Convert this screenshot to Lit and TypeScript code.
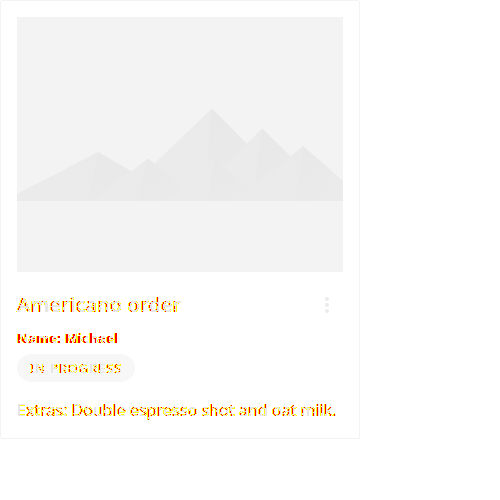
import { LitElement, html, css, svg } from "lit";
import { customElement } from "lit/decorators.js";

@customElement("app-root")
export class AppRoot extends LitElement {
  static styles = css`
    :host { display: block; width: 500px; height: 500px; background: #fff; font-family: "Noto Sans", "Open Sans", sans-serif; }
    .card { box-sizing: border-box; width: 360px; height: 439px; padding: 16px; border: 1px solid #f3f3f3; border-radius: 2px; }
    .picture { display: block; width: 326px; height: 255px; }
    .head { display: flex; justify-content: space-between; align-items: center; height: 28px; margin-top: 19px; }
    .title { margin: 0; font-size: 20px; line-height: 28px; font-weight: 500; letter-spacing: 0.2px; }
    .dots { width: 32px; height: 32px; display: block; }
    .name { margin: 9px 0 0; font-size: 13px; line-height: 20px; font-weight: 700; letter-spacing: 0.36px; }
    .badge { box-sizing: border-box; display: flex; align-items: center; width: 118px; height: 28px; margin-top: 6px; padding-left: 13px; border-radius: 14px; background: #f7f7f7; font-size: 13px; line-height: 20px; letter-spacing: 0.85px; }
    .extras { margin: 16px 0 0; font-size: 16px; line-height: 24px; letter-spacing: 0.03px; white-space: nowrap; }
    .diff { display: inline-block; white-space: nowrap; filter: url(#diff-light); color: #000; }
    .name .diff { filter: url(#diff-heavy); }
    .defs { position: absolute; width: 0; height: 0; }
  `;

  private mountain(points: string, id: string) {
    return svg`<polygon points=${points} fill=${`url(#${id})`} />`;
  }

  private diffFilter(id: string, patches: string, reach: number) {
    return svg`
      <filter id=${id} x="-2%" y="-5%" width="104%" height="110%" color-interpolation-filters="sRGB">
        <feComponentTransfer in="SourceAlpha" result="edge"><feFuncA type="discrete" tableValues="0 1 1 1 1 1 1 1 1 1 1 1" /></feComponentTransfer>
        <feComponentTransfer in="SourceAlpha" result="core"><feFuncA type="discrete" tableValues="0 0 0 0 1 1 1 1 1 1" /></feComponentTransfer>
        <feComponentTransfer in="SourceAlpha" result="strong"><feFuncA type="discrete" tableValues="0 0 0 0 0 1 1 1 1 1" /></feComponentTransfer>
        <feOffset in="strong" dx="-1" result="left" />
        <feOffset in="core" dx=${reach} result="right" />
        <feMerge result="outline"><feMergeNode in="edge" /><feMergeNode in="left" /></feMerge>
        <feComposite in="strong" in2="right" operator="out" result="changed" />
        <feTurbulence type="fractalNoise" baseFrequency="0.3 0.2" numOctaves="2" seed="4" />
        <feColorMatrix type="matrix" values="0 0 0 0 0  0 0 0 0 0  0 0 0 0 0  1 0 0 0 0" />
        <feComponentTransfer result="patch"><feFuncA type="discrete" tableValues=${patches} /></feComponentTransfer>
        <feComposite in="changed" in2="patch" operator="in" result="marked" />
        <feFlood flood-color="#ffff00" /><feComposite in2="outline" operator="in" result="yellow" />
        <feFlood flood-color="#e6e6e6" /><feComposite in2="core" operator="in" result="gray" />
        <feFlood flood-color="#ff0000" /><feComposite in2="marked" operator="in" result="red" />
        <feMerge><feMergeNode in="yellow" /><feMergeNode in="gray" /><feMergeNode in="red" /></feMerge>
      </filter>`;
  }

  render() {
    return html`
      <svg class="defs" aria-hidden="true">
        ${this.diffFilter("diff-light", "0 0 0 0 1 1 1 1 1 1", 1)}
        ${this.diffFilter("diff-heavy", "0 0 0 1 1 1 1 1 1 1", 2)}
      </svg>
      <article class="card">
        <svg class="picture" viewBox="17 17 326 255">
          <defs>
            <linearGradient id="wide"><stop offset="0" stop-color="#ebebeb" /><stop offset="1" stop-color="#eaeaea" /></linearGradient>
            <linearGradient id="shade" x1="0" y1="0" x2="1" y2="1"><stop offset="0" stop-color="#e8e8e8" /><stop offset="1" stop-color="#ebebeb" /></linearGradient>
          </defs>
          <rect x="17" y="17" width="326" height="255" fill="#f3f3f3" />
          ${this.mountain("17,194 98,152 182,201 17,201", "wide")}
          ${this.mountain("98,152 182,201 87,201", "shade")}
          ${this.mountain("115,201 212,108.5 303,201", "wide")}
          ${this.mountain("212,108.5 303,201 203,201", "shade")}
          ${this.mountain("92,201 148,158.5 200,201", "wide")}
          ${this.mountain("148,158.5 200,201 137,201", "shade")}
          ${this.mountain("190,201 262,128.5 336,201", "wide")}
          ${this.mountain("262,128.5 336,201 253,201", "shade")}
          ${this.mountain("165,201 214,158 265,201", "wide")}
          ${this.mountain("214,158 265,201 208,201", "shade")}
          ${this.mountain("237,201 303,146 343,181 343,201", "wide")}
          ${this.mountain("303,146 343,181 343,201 295,201", "shade")}
        </svg>
        <div class="head">
          <h2 class="title"><span class="diff">Americano order</span></h2>
          <svg class="dots" viewBox="0 0 32 32" fill="#ebebeb"><circle cx="16" cy="10" r="2" /><circle cx="16" cy="16" r="2" /><circle cx="16" cy="22" r="2" /></svg>
        </div>
        <p class="name"><span class="diff">Name: Michael</span></p>
        <div class="badge"><span class="diff">IN PROGRESS</span></div>
        <p class="extras"><span class="diff">Extras: Double espresso shot and oat milk.</span></p>
      </article>
    `;
  }
}
